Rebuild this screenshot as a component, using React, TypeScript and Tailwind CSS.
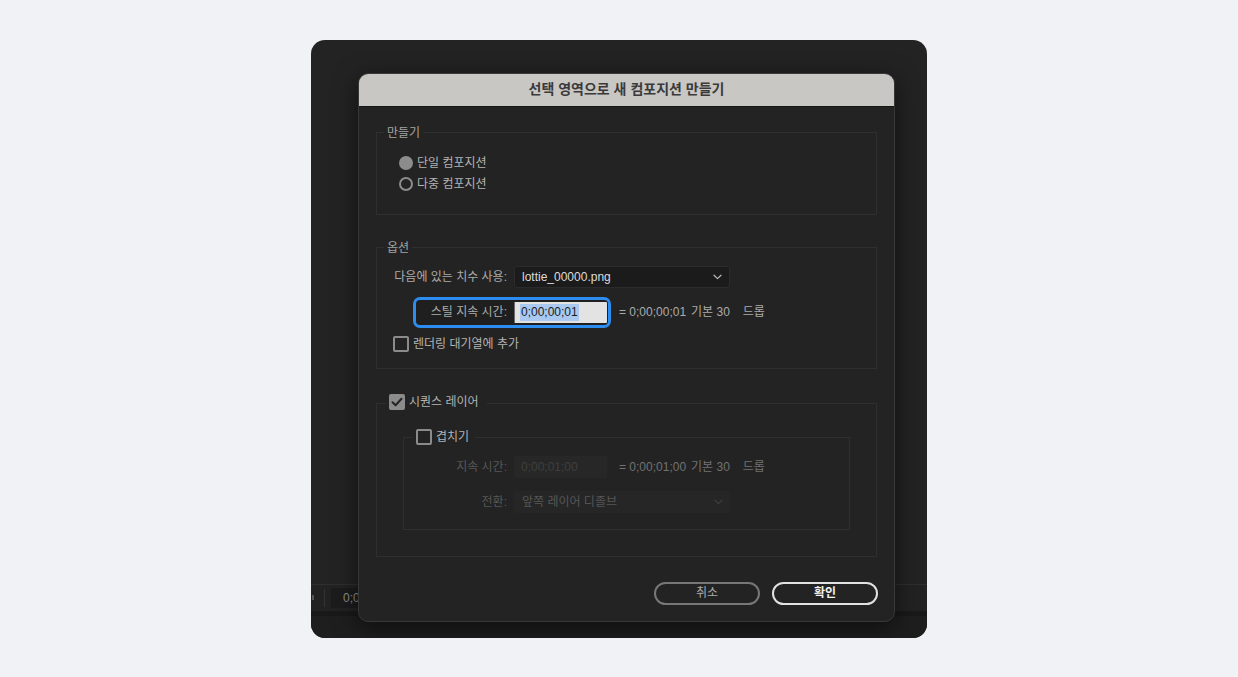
import React from "react";

const font = "font-['Liberation_Sans','Noto_Sans_CJK_KR',sans-serif]";

function Chevron({ dim }: { dim?: boolean }) {
  return (
    <svg width="9" height="6" viewBox="0 0 9 6" fill="none" className="shrink-0">
      <path d="M1 1.2 L4.5 4.6 L8 1.2" stroke={dim ? "#3e3e3e" : "#b8b8b8"} strokeWidth="1.2" strokeLinecap="round" strokeLinejoin="round" />
    </svg>
  );
}

function Box({ checked }: { checked?: boolean }) {
  if (checked) {
    return (
      <span className="flex h-[16px] w-[16px] shrink-0 items-center justify-center rounded-[2px] bg-[#8b8b8b]">
        <svg width="12" height="10" viewBox="0 0 12 10" fill="none">
          <path d="M1.5 5.2 L4.6 8.2 L10.5 1.8" stroke="#242424" strokeWidth="2" strokeLinecap="round" strokeLinejoin="round" />
        </svg>
      </span>
    );
  }
  return <span className="h-[16px] w-[16px] shrink-0 rounded-[2px] border-2 border-[#8b8b8b]" />;
}

function Radio({ on, label }: { on?: boolean; label: string }) {
  return (
    <div className="flex h-[21px] items-center">
      {on ? (
        <span className="h-[14px] w-[14px] rounded-full bg-[#8c8c8c]" />
      ) : (
        <span className="h-[14px] w-[14px] rounded-full border-2 border-[#8c8c8c]" />
      )}
      <span className="ml-[4px] text-[12px] text-[#b3b3b3]">{label}</span>
    </div>
  );
}

function Trail({ value, dim }: { value: string; dim?: boolean }) {
  return (
    <div className={`flex items-center text-[12px] ${dim ? "text-[#727272]" : "text-[#ababab]"}`}>
      <span>= {value}</span>
      <span className="ml-[5px]">기본 30</span>
      <span className="ml-[13px]">드롭</span>
    </div>
  );
}

export default function App() {
  return (
    <div className={`flex h-screen w-full items-center justify-center bg-[#f1f2f6] ${font}`}>
      <div className="relative flex h-[598px] w-[616px] flex-col overflow-hidden rounded-[14px] bg-[#232323]">
        <div className="flex-1" />
        <div className="flex h-[27px] items-center border-t border-[#2f2f2f] bg-[#222222]">
          <span className="ml-[1px] h-[5px] w-[2px] bg-[#555]" />
          <span className="ml-[10px] h-[18px] w-px bg-[#333]" />
          <div className="ml-[6px] flex h-[20px] w-[120px] items-center rounded-[2px] bg-[#1c1c1c] pl-[12px] text-[12px] text-[#8f8f8f]">
            0;00;00;00
          </div>
        </div>
        <div className="h-[5px] bg-[#191919]" />
        <div className="h-[22px] bg-[#1e1e1e]" />

        <div className="absolute left-[47px] top-[33px] w-[537px] overflow-hidden rounded-[10px] border border-[#383838] bg-[#232323] shadow-[0_6px_24px_rgba(0,0,0,0.55)]">
          <div className="flex h-[32px] items-center justify-center bg-[#c9c7c4] text-[14px] font-bold text-[#3a3a3a]">
            선택 영역으로 새 컴포지션 만들기
          </div>
          <div className="h-px bg-[#161616]" />

          <div className="px-[17px] pt-[18px]">
            <fieldset className="border border-[#2f2f2f] pb-[19px] pt-[12px]">
              <legend className="ml-[7px] px-[3px] text-[12px] leading-[16px] text-[#a3a3a3]">만들기</legend>
              <div className="pl-[22px]">
                <Radio on label="단일 컴포지션" />
                <Radio label="다중 컴포지션" />
              </div>
            </fieldset>

            <fieldset className="mt-[25px] border border-[#2f2f2f] pb-[16px] pt-[10px]">
              <legend className="ml-[7px] px-[3px] text-[12px] leading-[16px] text-[#a3a3a3]">옵션</legend>
              <div className="flex h-[22px] items-center">
                <span className="w-[130px] text-right text-[12px] text-[#ababab]">다음에 있는 치수 사용:</span>
                <div className="ml-[7px] flex h-[22px] w-[216px] items-center justify-between rounded-[2px] border border-[#2b2b2b] bg-[#1b1b1b] pl-[7px] pr-[7px]">
                  <span className="text-[12px] text-[#dcdcdc]">lottie_00000.png</span>
                  <Chevron />
                </div>
              </div>
              <div className="mt-[9px] flex h-[31px] items-center">
                <div className="ml-[36px] flex h-[31px] w-[198px] items-center rounded-[7px] border-[3px] border-[#2d8cf0] bg-[#1f1f1f]">
                  <span className="w-[91px] text-right text-[12px] text-[#ababab]">스틸 지속 시간:</span>
                  <div className="ml-[7px] flex h-[21px] w-[93px] items-center rounded-[1px] border-l border-[#6a6a6a] bg-[#e3e3e3] pl-[5px]">
                    <span className="bg-[#a9c9f1] px-px text-[12px] leading-[17px] text-[#1b1b1b]">0;00;00;01</span>
                  </div>
                </div>
                <div className="ml-[8px]">
                  <Trail value="0;00;00;01" />
                </div>
              </div>
              <div className="ml-[16px] mt-[8px] flex h-[16px] items-center">
                <Box />
                <span className="ml-[4px] text-[12px] text-[#b3b3b3]">렌더링 대기열에 추가</span>
              </div>
            </fieldset>

            <fieldset className="mt-[25px] border border-[#2f2f2f] pb-[26px] pt-[15px]">
              <legend className="ml-[9px] flex h-[20px] items-start pl-[3px] pr-[8px]">
                <Box checked />
                <span className="ml-[4px] text-[12px] leading-[16px] text-[#b3b3b3]">시퀀스 레이어</span>
              </legend>
              <div className="px-[26px]">
                <fieldset className="border border-[#2f2f2f] pb-[16px] pt-[9px]">
                  <legend className="ml-[9px] flex h-[18px] items-start pl-[3px] pr-[6px]">
                    <Box />
                    <span className="ml-[4px] text-[12px] leading-[16px] text-[#b3b3b3]">겹치기</span>
                  </legend>
                  <div className="flex h-[22px] items-center">
                    <span className="w-[103px] text-right text-[12px] text-[#575757]">지속 시간:</span>
                    <div className="ml-[7px] flex h-[22px] w-[93px] items-center rounded-[1px] bg-[#272727] pl-[7px]">
                      <span className="text-[12px] text-[#3f3f3f]">0;00;01;00</span>
                    </div>
                    <div className="ml-[12px]">
                      <Trail value="0;00;01;00" dim />
                    </div>
                  </div>
                  <div className="mt-[13px] flex h-[22px] items-center">
                    <span className="w-[103px] text-right text-[12px] text-[#575757]">전환:</span>
                    <div className="ml-[7px] flex h-[22px] w-[216px] items-center justify-between rounded-[2px] bg-[#262626] pl-[8px] pr-[7px]">
                      <span className="text-[12px] text-[#565656]">앞쪽 레이어 디졸브</span>
                      <Chevron dim />
                    </div>
                  </div>
                </fieldset>
              </div>
            </fieldset>

            <div className="mt-[25px] flex justify-end gap-[12px] pb-[16px]">
              <button className="flex h-[23px] w-[106px] items-center justify-center rounded-full border-2 border-[#777777] text-[12px] text-[#aaaaaa]">
                취소
              </button>
              <button className="-mr-px flex h-[23px] w-[106px] items-center justify-center rounded-full border-2 border-[#e2e2e2] text-[12px] font-bold text-[#f2f2f2]">
                확인
              </button>
            </div>
          </div>
        </div>
      </div>
    </div>
  );
}
